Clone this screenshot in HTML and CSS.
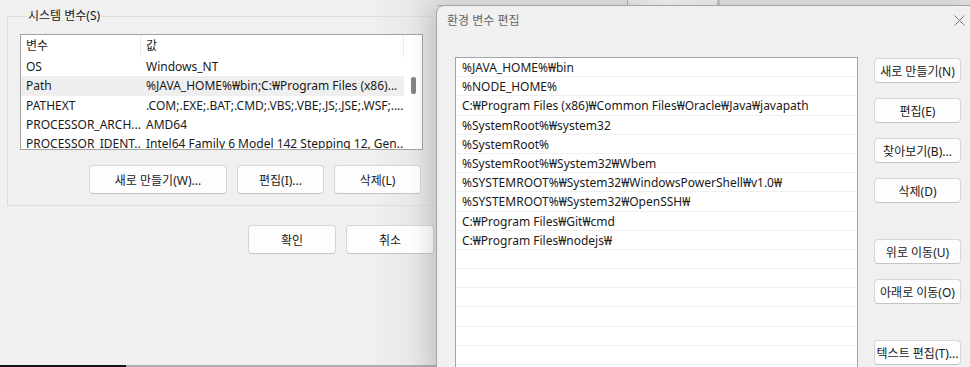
FILE: index.html
```html
<!DOCTYPE html>
<html lang="ko">
<head>
<meta charset="UTF-8">
<title>환경 변수 편집</title>
<link rel="stylesheet" href="styles.css">
</head>
<body>
<div class="back-strip">
    <span class="strip-tab"></span>
</div>

<div class="sys-window">
    <fieldset class="group">
        <legend>시스템 변수(S)</legend>
        <div class="var-list">
            <div class="lv-body">
                <div class="lv-head">
                    <span class="col-name">변수</span>
                    <span class="col-value">값</span>
                </div>
                <div class="lv-row"><span class="col-name">OS</span><span class="col-value">Windows_NT</span></div>
                <div class="lv-row selected"><span class="col-name">Path</span><span class="col-value">%JAVA_HOME%₩bin;C:₩Program Files (x86)...</span></div>
                <div class="lv-row"><span class="col-name">PATHEXT</span><span class="col-value">.COM;.EXE;.BAT;.CMD;.VBS;.VBE;.JS;.JSE;.WSF;....</span></div>
                <div class="lv-row"><span class="col-name">PROCESSOR_ARCH...</span><span class="col-value">AMD64</span></div>
                <div class="lv-row"><span class="col-name">PROCESSOR_IDENT...</span><span class="col-value">Intel64 Family 6 Model 142 Stepping 12, Gen...</span></div>
            </div>
            <div class="lv-scroll"><span class="thumb"></span></div>
        </div>
        <div class="btn-row">
            <button class="btn wide">새로 만들기(W)...</button>
            <button class="btn">편집(I)...</button>
            <button class="btn">삭제(L)</button>
        </div>
    </fieldset>
    <div class="ok-row">
        <button class="btn">확인</button>
        <button class="btn">취소</button>
    </div>
</div>

<div class="taskbar-edge"><span class="active"></span></div>

<div class="edit-window">
    <div class="titlebar">
        <span class="title">환경 변수 편집</span>
        <svg class="close" width="11" height="11" viewBox="0 0 11 11">
            <path d="M0.5 0.5 L10.5 10.5 M10.5 0.5 L0.5 10.5" stroke="#7a7a7a" stroke-width="1" fill="none"/>
        </svg>
    </div>
    <div class="edit-body">
        <div class="path-list">
            <div class="path-row">%JAVA_HOME%₩bin</div>
            <div class="path-row">%NODE_HOME%</div>
            <div class="path-row">C:₩Program Files (x86)₩Common Files₩Oracle₩Java₩javapath</div>
            <div class="path-row">%SystemRoot%₩system32</div>
            <div class="path-row">%SystemRoot%</div>
            <div class="path-row">%SystemRoot%₩System32₩Wbem</div>
            <div class="path-row">%SYSTEMROOT%₩System32₩WindowsPowerShell₩v1.0₩</div>
            <div class="path-row">%SYSTEMROOT%₩System32₩OpenSSH₩</div>
            <div class="path-row">C:₩Program Files₩Git₩cmd</div>
            <div class="path-row">C:₩Program Files₩nodejs₩</div>
            <div class="path-row"></div>
            <div class="path-row"></div>
            <div class="path-row"></div>
            <div class="path-row"></div>
            <div class="path-row"></div>
            <div class="path-row"></div>
        </div>
        <div class="side-buttons">
            <button class="btn small">새로 만들기(N)</button>
            <button class="btn small">편집(E)</button>
            <button class="btn small">찾아보기(B)...</button>
            <button class="btn small">삭제(D)</button>
            <button class="btn small gap-big">위로 이동(U)</button>
            <button class="btn small">아래로 이동(O)</button>
            <button class="btn small gap-big">텍스트 편집(T)...</button>
        </div>
    </div>
</div>
</body>
</html>
```

FILE: styles.css
```css
* {
    box-sizing: border-box;
}

body {
    position: relative;
    width: 970px;
    height: 367px;
    margin: 0;
    overflow: hidden;
    background: #f0f0f0;
    font-family: "Noto Sans", "Noto Sans CJK KR", sans-serif;
    font-size: 12px;
    color: #1a1a1a;
}

/* window behind the edit dialog, only its bottom edge shows */
.back-strip {
    position: absolute;
    left: 436px;
    top: 0;
    width: 534px;
    height: 6px;
    background: #e2e2e2;
    border-bottom: 1px solid #b8b8b8;
}

.strip-tab {
    position: absolute;
    left: 191px;
    top: 0;
    width: 93px;
    height: 5px;
    background: linear-gradient(to right, #e6e6e6, #f4f4f4 40%, #ececec);
    border-left: 1px solid #b5b5b5;
    border-right: 3px solid #c4c4c4;
}

/* system properties window */
.sys-window {
    position: absolute;
    left: 0;
    top: 0;
    width: 437px;
    height: 365px;
    padding: 8px 0 0 7px;
    background: linear-gradient(to right, #f0f0f0 85%, #e2e2e2);
}

.group {
    width: 432px;
    min-width: 0;
    margin: 0;
    padding: 10px 0 11px 12px;
    border: 1px solid #dcdcdc;
}

.group legend {
    margin-left: 6px;
    padding: 0 2px;
    line-height: 16px;
}

.var-list {
    display: flex;
    width: 403px;
    height: 116px;
    background: #fff;
    border: 1px solid #a3a3a3;
    overflow: hidden;
}

.lv-body {
    flex: 1;
    overflow: hidden;
}

.lv-head,
.lv-row {
    display: flex;
    white-space: nowrap;
}

.lv-head {
    height: 22px;
    line-height: 22px;
    border-right: 1px solid #ececec;
}

.lv-row {
    height: 19.3px;
    line-height: 19px;
}

.lv-row.selected {
    background: #efefef;
}

.col-name {
    width: 120px;
    padding-left: 5px;
    overflow: hidden;
    flex-shrink: 0;
}

.lv-head .col-name {
    border-right: 1px solid #ececec;
}

.col-value {
    padding-left: 5px;
    overflow: hidden;
}

.lv-scroll {
    position: relative;
    width: 18px;
}

.thumb {
    position: absolute;
    left: 7px;
    top: 42px;
    width: 5px;
    height: 17px;
    border-radius: 2px;
    background: #858585;
}

.btn {
    height: 29px;
    padding: 0;
    background: #fdfdfd;
    border: 1px solid #d6d6d6;
    border-bottom-color: #c4c4c4;
    border-radius: 4px;
    font-family: inherit;
    font-size: 12px;
    color: #1a1a1a;
    width: 87px;
}

.btn.wide {
    width: 138px;
}

.btn-row {
    display: flex;
    justify-content: flex-end;
    gap: 10px;
    width: 403px;
    margin-top: 15px;
    padding-right: 2px;
}

.ok-row {
    display: flex;
    justify-content: flex-end;
    gap: 10px;
    margin-top: 19px;
    padding-right: 3px;
}

.ok-row .btn {
    width: 88px;
}

.taskbar-edge {
    position: absolute;
    left: 0;
    bottom: 0;
    width: 436px;
    height: 2px;
    background: #aeaeae;
}

.taskbar-edge .active {
    display: block;
    width: 126px;
    height: 2px;
    background: #141414;
}

/* edit environment variable dialog */
.edit-window {
    position: absolute;
    left: 436px;
    top: 5px;
    width: 536px;
    height: 370px;
    background: #f0f0f0;
    border: 1px solid #a6a6a6;
    border-radius: 8px 0 0 0;
    box-shadow: -6px 0 22px rgba(0, 0, 0, 0.14);
}

.titlebar {
    display: flex;
    align-items: center;
    height: 28px;
    padding: 0 6px 0 10px;
}

.title {
    flex: 1;
    color: #666;
}

.edit-body {
    display: flex;
    gap: 16px;
    margin-top: 23px;
    padding-left: 18px;
}

.path-list {
    width: 403px;
    height: 320px;
    background: #fff;
    border: 1px solid #a3a3a3;
    border-bottom: none;
}

.path-row {
    height: 19.2px;
    line-height: 20px;
    padding-left: 6px;
    border-bottom: 1px solid #f0f0f0;
    white-space: nowrap;
}

.side-buttons {
    display: flex;
    flex-direction: column;
    gap: 15px;
    padding-top: 1px;
}

.btn.small {
    height: 25px;
    flex-shrink: 0;
}

.btn.gap-big {
    margin-top: 21px;
}
```
